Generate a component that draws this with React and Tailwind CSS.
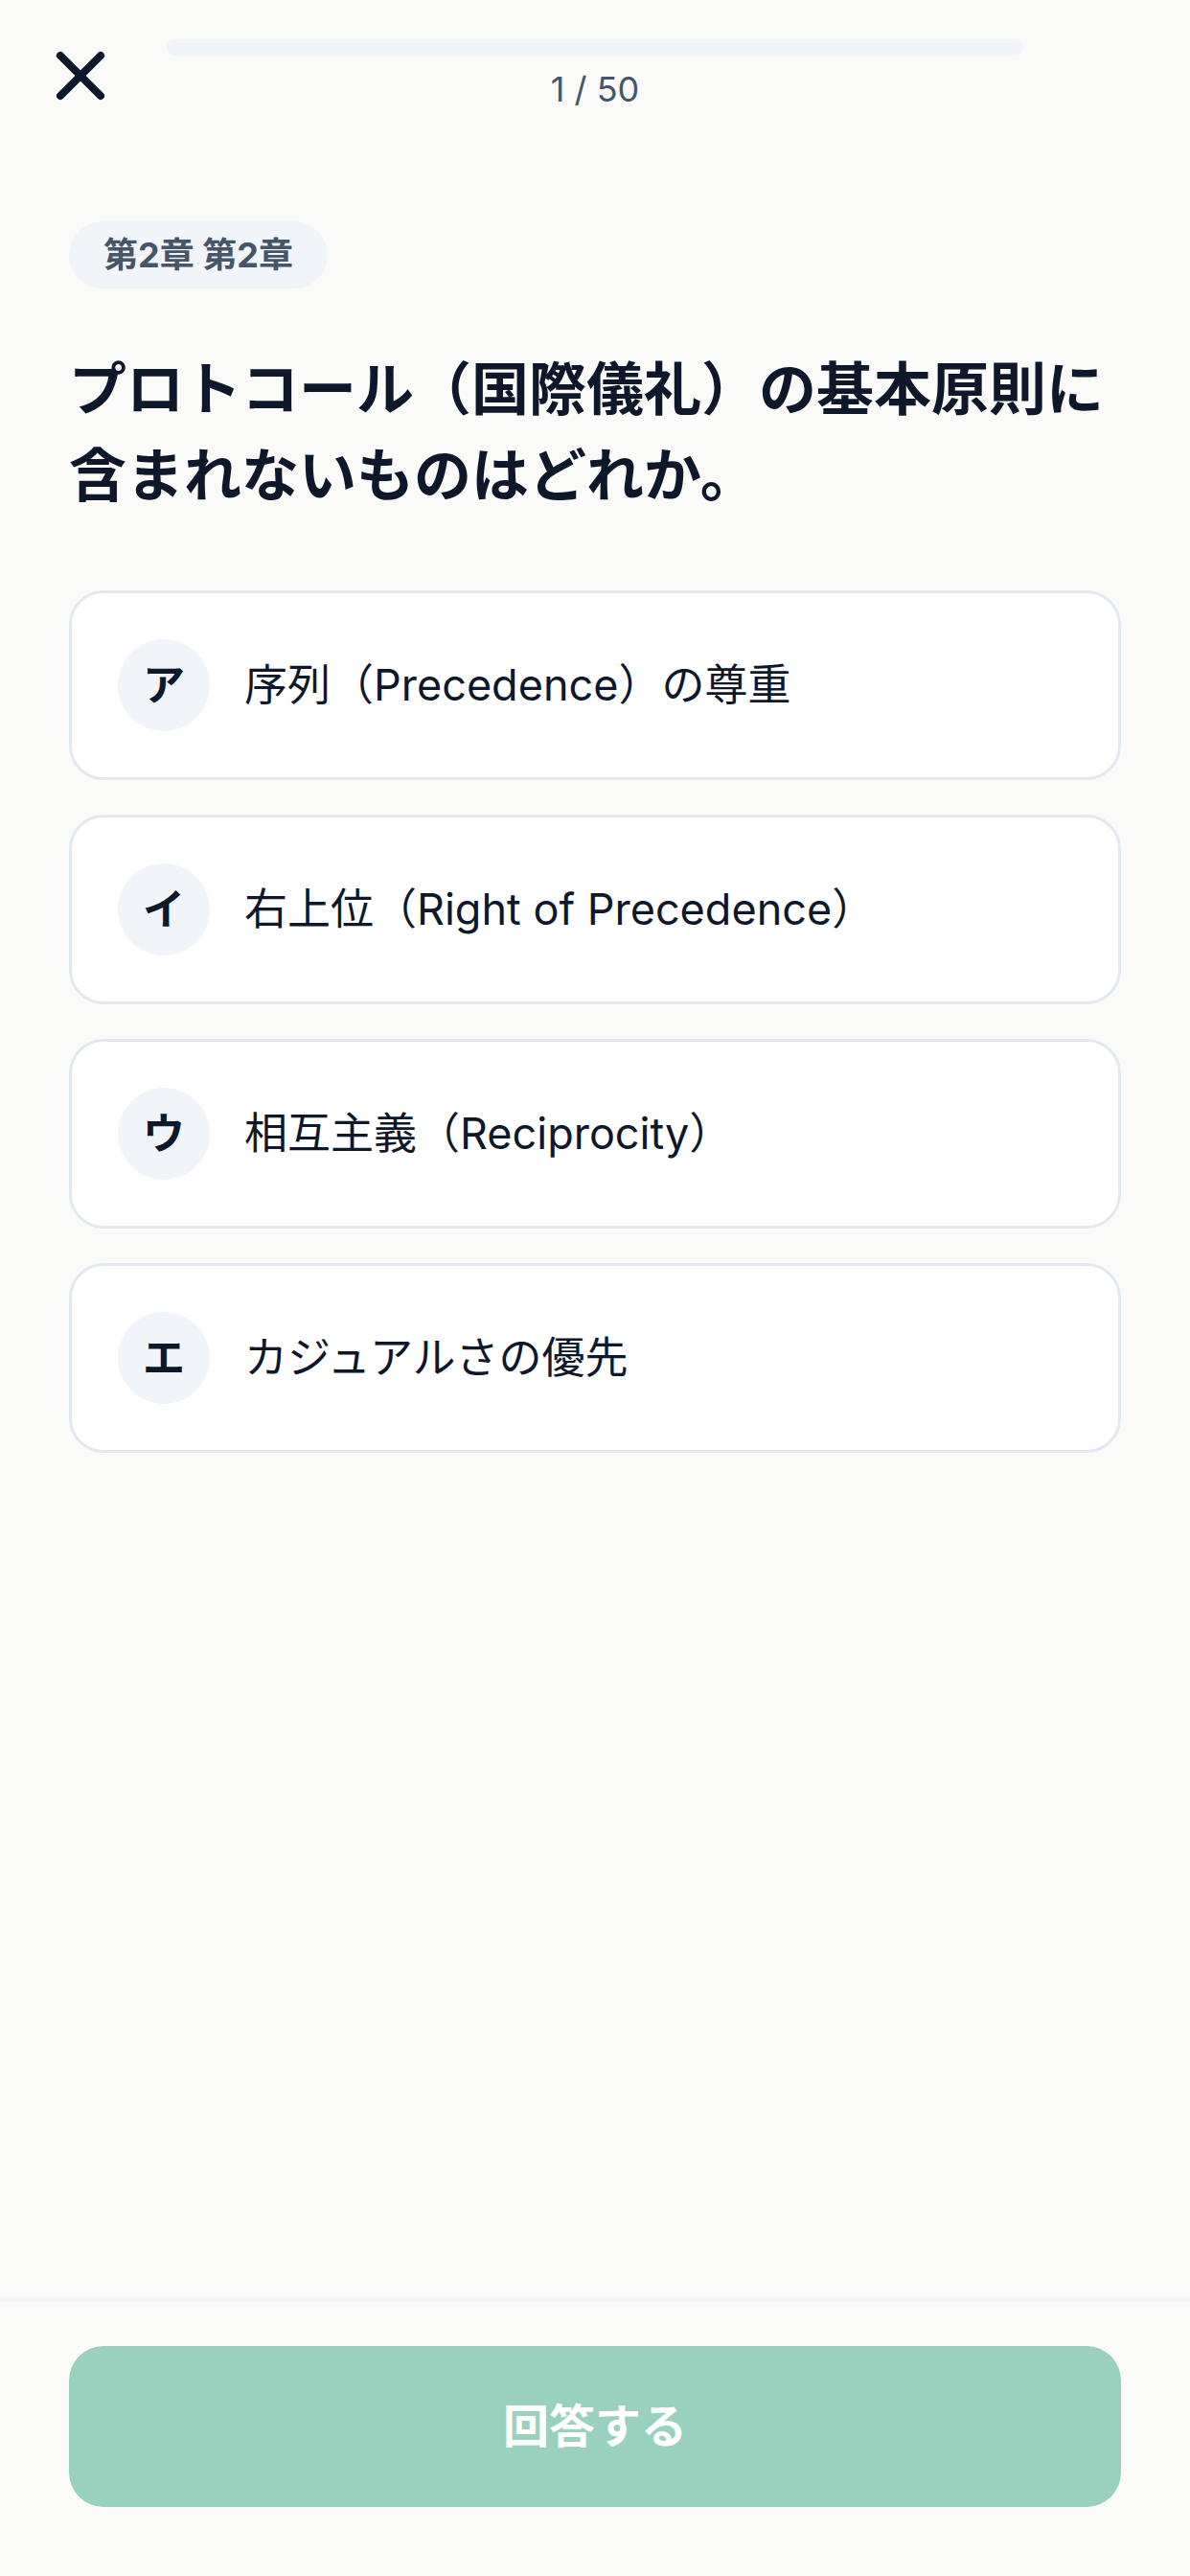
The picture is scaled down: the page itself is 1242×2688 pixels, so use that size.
import React from 'react';

const OPTIONS = [
  { key: 'ア', text: '序列（Precedence）の尊重' },
  { key: 'イ', text: '右上位（Right of Precedence）' },
  { key: 'ウ', text: '相互主義（Reciprocity）' },
  { key: 'エ', text: 'カジュアルさの優先' },
];

function CloseIcon() {
  return (
    <svg width="84" height="84" viewBox="0 0 24 24" fill="none" stroke="#0f172a" strokeWidth="2.3" strokeLinecap="round">
      <path d="M18 6 6 18" />
      <path d="m6 6 12 12" />
    </svg>
  );
}

export default function App() {
  return (
    <div
      className="w-full h-[2688px] flex flex-col bg-[#fafaf9] text-[#0f172a]"
      style={{ fontFamily: 'Inter, "Noto Sans CJK JP", sans-serif' }}
    >
      {/* header */}
      <div className="flex items-center px-[42px] pt-[37px]">
        <button className="w-[84px] h-[84px] flex items-center justify-center">
          <CloseIcon />
        </button>
        <div className="flex-1 mx-[48px] flex flex-col items-center gap-[11px]">
          <div className="w-full h-[17px] rounded-full bg-[#f1f5f9]" />
          <span className="text-[36px] leading-[48px] text-[#475569]">1 / 50</span>
        </div>
        <div className="w-[84px]" />
      </div>

      {/* body */}
      <div className="flex-1 px-[72px] pt-[110px]">
        <div className="inline-flex items-center h-[70px] px-[36px] rounded-full bg-[#f1f5f9] text-[#475569] text-[36px] font-bold">
          第2章 第2章
        </div>

        <h1 className="mt-[60px] text-[60px] leading-[90px] font-bold">
          プロトコール（国際儀礼）の基本原則に含まれないものはどれか。
        </h1>

        <div className="mt-[75px] flex flex-col gap-[36px]">
          {OPTIONS.map(o => (
            <div
              key={o.key}
              className="flex items-center gap-[36px] p-[48px] bg-white border-[3px] border-[#e2e8f0] rounded-[36px]"
            >
              <div className="w-[96px] h-[96px] shrink-0 rounded-full bg-[#f1f5f9] flex items-center justify-center text-[44px] font-bold">
                {o.key}
              </div>
              <span className="text-[45px] leading-[60px]">{o.text}</span>
            </div>
          ))}
        </div>
      </div>

      {/* footer */}
      <div className="border-t-[3px] border-[#f1f5f9] px-[72px] pt-[47px] pb-[72px]">
        <button className="w-full h-[168px] rounded-[36px] bg-[#9ad1be] text-white text-[48px] font-bold">
          回答する
        </button>
      </div>
    </div>
  );
}
